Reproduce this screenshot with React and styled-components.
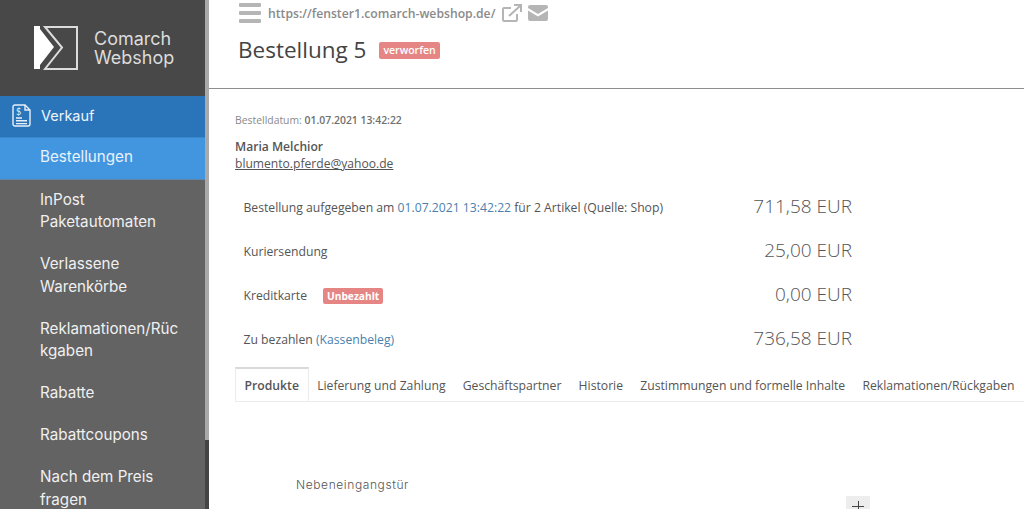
import React from 'react';
import styled, { createGlobalStyle } from 'styled-components';

const GlobalStyle = createGlobalStyle`
  html, body {
    margin: 0;
    height: 100%;
    overflow: hidden;
    background: #fff;
    font-family: 'Open Sans', sans-serif;
  }
`;

const Page = styled.div`
  display: flex;
  width: 1024px;
  height: 509px;
  overflow: hidden;
`;

const Sidebar = styled.aside`
  flex: 0 0 205px;
  background: #636363;
  color: #fff;
  font-family: Inter, sans-serif;
`;

const Logo = styled.div`
  height: 96px;
  background: #484848;
  display: flex;
  align-items: center;
  padding: 0 0 0 34px;
  gap: 16px;
  box-sizing: border-box;
`;

const LogoText = styled.div`
  font-size: 18px;
  line-height: 19px;
  color: #dcdcdc;
`;

const SectionRow = styled.div`
  height: 42px;
  box-sizing: border-box;
  padding: 0 0 3px 12px;
  background: #2a75ba;
  border-bottom: 1px solid #3a87cd;
  display: flex;
  align-items: center;
  gap: 10px;
  font-size: 14.5px;
  color: #eef4fa;
`;

const MenuItem = styled.div`
  padding: ${(p) => (p.$active ? '8px 10px 10px 40px' : '9px 10px 10.5px 40px')};
  font-size: 15.2px;
  line-height: 22.5px;
  color: ${(p) => (p.$active ? '#e8f2fb' : '#f0f0f0')};
  background: ${(p) => (p.$active ? '#4296e0' : 'transparent')};
  border-bottom: ${(p) => (p.$active ? '1px solid #5f86a8' : 'none')};
`;

const ScrollTrack = styled.div`
  flex: 0 0 4px;
  background: #a9a9a9;
  display: flex;
  flex-direction: column;
  justify-content: flex-end;
`;

const ScrollThumb = styled.div`
  height: 69px;
  background: #444;
`;

const Main = styled.main`
  flex: 1;
  min-width: 0;
  color: #555;
`;

const Header = styled.header`
  height: 89px;
  box-sizing: border-box;
  border-bottom: 1px solid #8e8e8e;
  padding-left: 30px;
`;

const TopBar = styled.div`
  display: flex;
  align-items: center;
  height: 26px;
`;

const UrlText = styled.span`
  font-size: 12.2px;
  font-weight: 600;
  color: #8a8a8a;
  margin: 0 7px 0 7px;
`;

const TitleRow = styled.div`
  display: flex;
  align-items: center;
  gap: 13px;
  margin-top: 7px;
`;

const Title = styled.h1`
  margin: 0 0 0 -1px;
  font-size: 22.5px;
  line-height: 34px;
  font-weight: 400;
  color: #444;
`;

const Badge = styled.span`
  display: inline-block;
  background: #e58685;
  color: #fff;
  border-radius: 2px;
  font-size: ${(p) => p.$size || 10.5}px;
  font-weight: ${(p) => p.$weight || 600};
  line-height: ${(p) => p.$height || 17}px;
  padding: 0 4px;
  margin-left: ${(p) => p.$left || 0}px;
`;

const Body = styled.section`
  padding: 24px 0 0 26px;
`;

const DateLine = styled.div`
  font-size: 10.4px;
  line-height: 14px;
  color: #8a8a8a;
  b {
    font-weight: 600;
    color: #6f6f6f;
  }
`;

const Customer = styled.div`
  font-size: 12.1px;
  font-weight: 600;
  line-height: 17px;
  margin-top: 11px;
  color: #555;
`;

const Email = styled.a`
  display: block;
  font-size: 12.1px;
  line-height: 17px;
  color: #555;
  text-decoration: underline;
`;

const Summary = styled.div`
  margin: 13px 0 0 8.5px;
  width: 608.5px;
`;

const SummaryRow = styled.div`
  display: flex;
  align-items: center;
  justify-content: space-between;
  height: 44.1px;
  font-size: 12.2px;
  color: #555;
`;

const Amount = styled.span`
  font-size: 19px;
  font-weight: 300;
  color: #555;
  padding-bottom: 2px;
`;

const Blue = styled.span`
  color: #4a7fae;
`;

const Tabs = styled.nav`
  display: flex;
  margin-top: 6px;
  border-bottom: 1px solid #ececec;
  height: 35px;
  box-sizing: border-box;
`;

const Tab = styled.div`
  padding: 0 8.6px;
  height: 34px;
  box-sizing: border-box;
  font-size: 12.2px;
  line-height: 37px;
  white-space: nowrap;
  font-weight: ${(p) => (p.$active ? 600 : 400)};
  color: #555;
  ${(p) =>
    p.$active &&
    `
    background: #fff;
    border: 1px solid #ececec;
    border-top: 2px solid #d9d9d9;
    border-bottom: none;
    line-height: 34px;
  `}
`;

const ProductRow = styled.div`
  display: flex;
  padding: 75px 0 0 61px;
  font-family: Inter, sans-serif;
  font-size: 12px;
  font-weight: 300;
  letter-spacing: 0.6px;
  color: #555;
`;

const PlusButton = styled.div`
  position: relative;
  width: 24px;
  height: 24px;
  margin: 19px 0 0 437px;
  background: #ededed;
  flex: none;
  &::before,
  &::after {
    content: '';
    position: absolute;
    background: #444;
  }
  &::before {
    left: 6px;
    top: 10px;
    width: 12px;
    height: 1px;
  }
  &::after {
    left: 12px;
    top: 5px;
    width: 1px;
    height: 12px;
  }
`;

const LogoMark = () => (
  <svg width="44" height="44" viewBox="0 0 44 44">
    <path d="M0 0H6V3L20 21L6 39V43H0Z" fill="#fff" />
    <path
      d="M11 1H43V43H11L28 21.5L11 1Z"
      fill="none"
      stroke="#dcdcdc"
      strokeWidth="2"
    />
  </svg>
);

const ReceiptIcon = () => (
  <svg width="19" height="23" viewBox="0 0 19 23" fill="none" stroke="#e6f0f9" strokeWidth="1.4">
    <path d="M3 1H13L18 6V20a2 2 0 0 1-2 2H3a2 2 0 0 1-2-2V3a2 2 0 0 1 2-2Z" />
    <path d="M13 1V6H18" />
    <path d="M4 14H10M4 16.8H15M4 19.6H15" />
    <text x="4" y="10.5" fontSize="9" fill="#e6f0f9" stroke="none" fontFamily="Lato, sans-serif">$</text>
  </svg>
);

const MenuIcon = () => (
  <svg width="22" height="20" viewBox="0 0 22 20" fill="#b5b5b5">
    <rect y="0" width="22" height="4" rx="1" />
    <rect y="8" width="22" height="4" rx="1" />
    <rect y="16" width="22" height="4" rx="1" />
  </svg>
);

const ExternalIcon = () => (
  <svg width="20" height="18" viewBox="0 0 20 18" fill="none" stroke="#b5b5b5" strokeWidth="2">
    <path d="M15 10V16a1 1 0 0 1-1 1H2a1 1 0 0 1-1-1V5a1 1 0 0 1 1-1H9" />
    <path d="M7 12L18 2" />
    <path d="M12 1H19V8" />
  </svg>
);

const MailIcon = () => (
  <svg width="20" height="16" viewBox="0 0 20 16" fill="#b5b5b5" style={{ marginLeft: 6 }}>
    <path d="M2 0H18a2 2 0 0 1 2 2V3L10 9L0 3V2a2 2 0 0 1 2-2Z" />
    <path d="M0 5.5L10 11.5L20 5.5V14a2 2 0 0 1-2 2H2a2 2 0 0 1-2-2Z" />
  </svg>
);

const menu = [
  ['InPost', 'Paketautomaten'],
  ['Verlassene', 'Warenkörbe'],
  ['Reklamationen/Rüc', 'kgaben'],
  ['Rabatte'],
  ['Rabattcoupons'],
  ['Nach dem Preis', 'fragen'],
];

const tabs = [
  'Produkte',
  'Lieferung und Zahlung',
  'Geschäftspartner',
  'Historie',
  'Zustimmungen und formelle Inhalte',
  'Reklamationen/Rückgaben',
];

const App = () => (
  <Page>
    <GlobalStyle />
    <Sidebar>
      <Logo>
        <LogoMark />
        <LogoText>
          Comarch
          <br />
          Webshop
        </LogoText>
      </Logo>
      <SectionRow>
        <ReceiptIcon />
        Verkauf
      </SectionRow>
      <MenuItem $active>Bestellungen</MenuItem>
      {menu.map((lines) => (
        <MenuItem key={lines[0]}>
          {lines.map((line) => (
            <div key={line}>{line}</div>
          ))}
        </MenuItem>
      ))}
    </Sidebar>
    <ScrollTrack>
      <ScrollThumb />
    </ScrollTrack>
    <Main>
      <Header>
        <TopBar>
          <MenuIcon />
          <UrlText>https://fenster1.comarch-webshop.de/</UrlText>
          <ExternalIcon />
          <MailIcon />
        </TopBar>
        <TitleRow>
          <Title>Bestellung 5</Title>
          <Badge>verworfen</Badge>
        </TitleRow>
      </Header>
      <Body>
        <DateLine>
          Bestelldatum: <b>01.07.2021 13:42:22</b>
        </DateLine>
        <Customer>Maria Melchior</Customer>
        <Email>blumento.pferde@yahoo.de</Email>
        <Summary>
          <SummaryRow>
            <span>
              Bestellung aufgegeben am <Blue>01.07.2021 13:42:22</Blue> für 2 Artikel (Quelle: Shop)
            </span>
            <Amount>711,58 EUR</Amount>
          </SummaryRow>
          <SummaryRow>
            <span>Kuriersendung</span>
            <Amount>25,00 EUR</Amount>
          </SummaryRow>
          <SummaryRow>
            <span>
              Kreditkarte
              <Badge $left={16} $height={16} $weight={700} $size={10.2}>Unbezahlt</Badge>
            </span>
            <Amount>0,00 EUR</Amount>
          </SummaryRow>
          <SummaryRow>
            <span>
              Zu bezahlen <Blue>(Kassenbeleg)</Blue>
            </span>
            <Amount>736,58 EUR</Amount>
          </SummaryRow>
        </Summary>
        <Tabs>
          {tabs.map((t, i) => (
            <Tab key={t} $active={i === 0}>
              {t}
            </Tab>
          ))}
        </Tabs>
        <ProductRow>
          Nebeneingangstür
          <PlusButton />
        </ProductRow>
      </Body>
    </Main>
  </Page>
);

export default App;
